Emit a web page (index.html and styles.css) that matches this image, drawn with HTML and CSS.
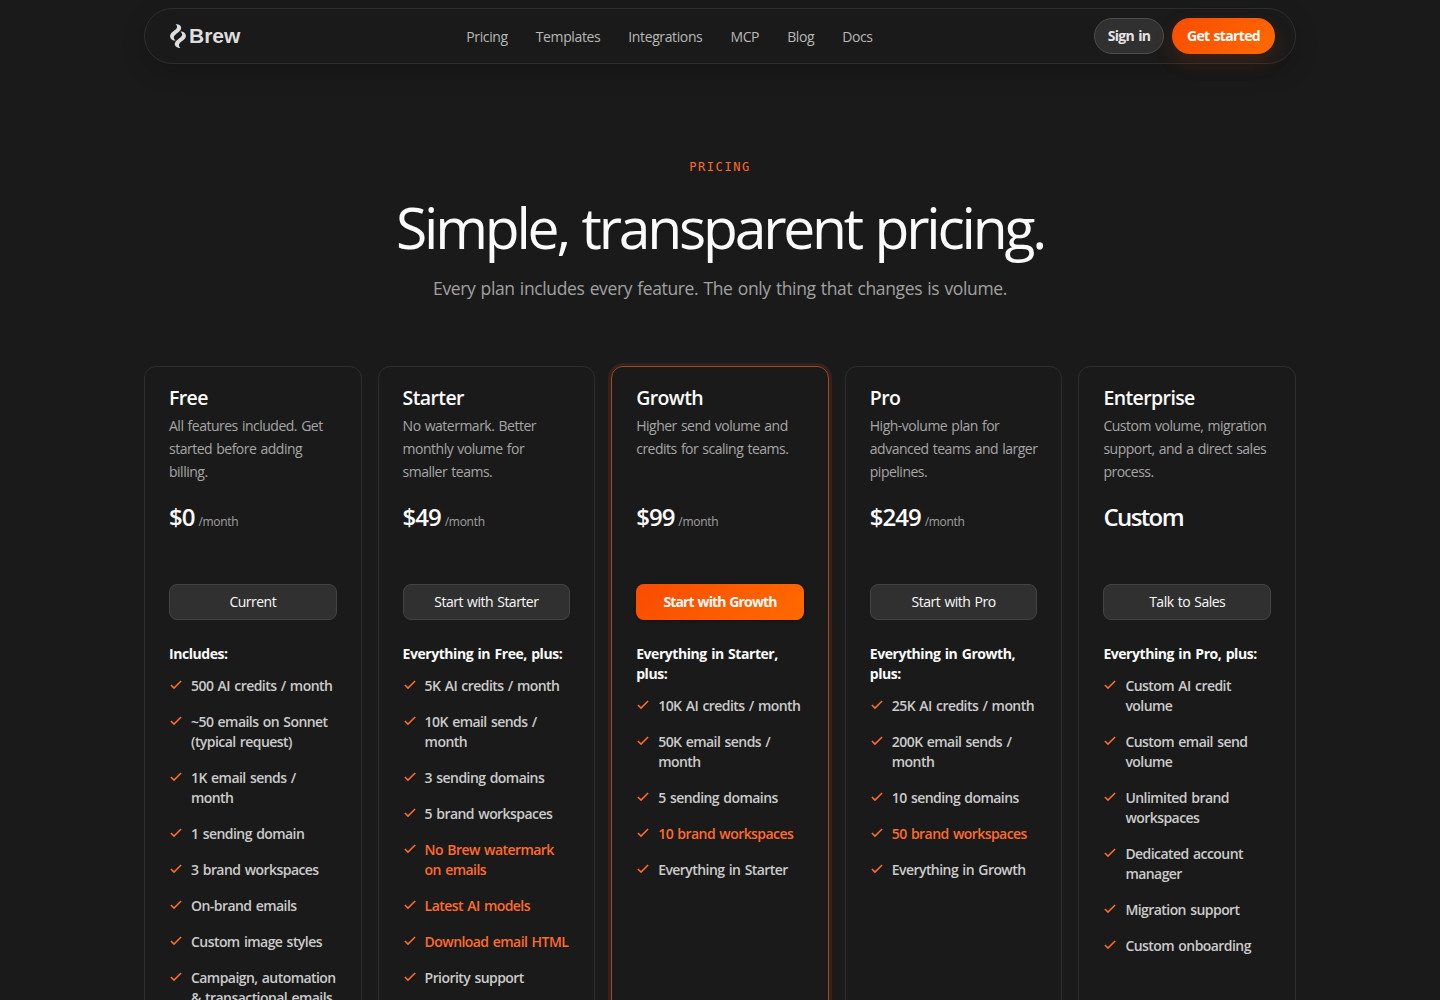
FILE: index.html
```html
<!DOCTYPE html>
<html lang="en">
<head>
    <meta charset="UTF-8">
    <meta name="viewport" content="width=device-width, initial-scale=1.0">
    <title>Brew - Pricing</title>
    <link rel="stylesheet" href="styles.css">
</head>
<body>
    <svg width="0" height="0" class="sprite">
        <symbol id="check" viewBox="0 0 14 14">
            <path d="M1.900 7l3.100 3.100L12.100 3" fill="none" stroke="currentColor" stroke-width="1.5"/>
        </symbol>
    </svg>

    <header class="navbar">
        <a class="logo" href="#">
            <svg width="16" height="24" viewBox="0 0 16 24">
                <path id="wisp" d="M5.500 0C9.800 0 12.200 2.800 10.800 5.600C9.400 8.400 4.400 10.400 3.800 13.200C3.600 14.500 4.600 15.500 5.600 16.600C2 16.800 0 14.500 0.100 11.800C0.300 8 6.300 6.500 7 3.600C7.300 2.200 6.700 1 5.500 0Z"/>
                <use href="#wisp" transform="rotate(180 8 12)"/>
            </svg>
            <span>Brew</span>
        </a>
        <nav class="menu">
            <a href="#">Pricing</a>
            <a href="#">Templates</a>
            <a href="#">Integrations</a>
            <a href="#">MCP</a>
            <a href="#">Blog</a>
            <a href="#">Docs</a>
        </nav>
        <div class="actions">
            <a class="sign-in" href="#"><span>Sign in</span></a>
            <a class="get-started" href="#"><span>Get started</span></a>
        </div>
    </header>

    <section class="hero">
        <p class="eyebrow">PRICING</p>
        <h1>Simple, transparent pricing.</h1>
        <p class="subtitle">Every plan includes every feature. The only thing that changes is volume.</p>
    </section>

    <main class="plans">
        <article class="plan">
            <h2>Free</h2>
            <p class="desc">All features included. Get<br>started before adding<br>billing.</p>
            <p class="price"><strong>$0</strong><span>/month</span></p>
            <a class="btn" href="#">Current</a>
            <h3>Includes:</h3>
            <ul>
                <li><svg><use href="#check"/></svg><span>500 AI credits / month</span></li>
                <li><svg><use href="#check"/></svg><span>~50 emails on Sonnet<br>(typical request)</span></li>
                <li><svg><use href="#check"/></svg><span>1K email sends /<br>month</span></li>
                <li><svg><use href="#check"/></svg><span>1 sending domain</span></li>
                <li><svg><use href="#check"/></svg><span>3 brand workspaces</span></li>
                <li><svg><use href="#check"/></svg><span>On-brand emails</span></li>
                <li><svg><use href="#check"/></svg><span>Custom image styles</span></li>
                <li><svg><use href="#check"/></svg><span>Campaign, automation<br>&amp; transactional emails</span></li>
            </ul>
        </article>

        <article class="plan">
            <h2>Starter</h2>
            <p class="desc">No watermark. Better<br>monthly volume for<br>smaller teams.</p>
            <p class="price"><strong>$49</strong><span>/month</span></p>
            <a class="btn" href="#">Start with Starter</a>
            <h3>Everything in Free, plus:</h3>
            <ul>
                <li><svg><use href="#check"/></svg><span>5K AI credits / month</span></li>
                <li><svg><use href="#check"/></svg><span>10K email sends /<br>month</span></li>
                <li><svg><use href="#check"/></svg><span>3 sending domains</span></li>
                <li><svg><use href="#check"/></svg><span>5 brand workspaces</span></li>
                <li class="highlight"><svg><use href="#check"/></svg><span>No Brew watermark<br>on emails</span></li>
                <li class="highlight"><svg><use href="#check"/></svg><span>Latest AI models</span></li>
                <li class="highlight"><svg><use href="#check"/></svg><span>Download email HTML</span></li>
                <li><svg><use href="#check"/></svg><span>Priority support</span></li>
            </ul>
        </article>

        <article class="plan featured">
            <h2>Growth</h2>
            <p class="desc">Higher send volume and<br>credits for scaling teams.</p>
            <p class="price"><strong>$99</strong><span>/month</span></p>
            <a class="btn primary" href="#">Start with Growth</a>
            <h3>Everything in Starter,<br>plus:</h3>
            <ul>
                <li><svg><use href="#check"/></svg><span>10K AI credits / month</span></li>
                <li><svg><use href="#check"/></svg><span>50K email sends /<br>month</span></li>
                <li><svg><use href="#check"/></svg><span>5 sending domains</span></li>
                <li class="highlight"><svg><use href="#check"/></svg><span>10 brand workspaces</span></li>
                <li><svg><use href="#check"/></svg><span>Everything in Starter</span></li>
            </ul>
        </article>

        <article class="plan">
            <h2>Pro</h2>
            <p class="desc">High-volume plan for<br>advanced teams and larger<br>pipelines.</p>
            <p class="price"><strong>$249</strong><span>/month</span></p>
            <a class="btn" href="#">Start with Pro</a>
            <h3>Everything in Growth,<br>plus:</h3>
            <ul>
                <li><svg><use href="#check"/></svg><span>25K AI credits / month</span></li>
                <li><svg><use href="#check"/></svg><span>200K email sends /<br>month</span></li>
                <li><svg><use href="#check"/></svg><span>10 sending domains</span></li>
                <li class="highlight"><svg><use href="#check"/></svg><span>50 brand workspaces</span></li>
                <li><svg><use href="#check"/></svg><span>Everything in Growth</span></li>
            </ul>
        </article>

        <article class="plan">
            <h2>Enterprise</h2>
            <p class="desc">Custom volume, migration<br>support, and a direct sales<br>process.</p>
            <p class="price custom"><strong>Custom</strong></p>
            <a class="btn" href="#">Talk to Sales</a>
            <h3>Everything in Pro, plus:</h3>
            <ul>
                <li><svg><use href="#check"/></svg><span>Custom AI credit<br>volume</span></li>
                <li><svg><use href="#check"/></svg><span>Custom email send<br>volume</span></li>
                <li><svg><use href="#check"/></svg><span>Unlimited brand<br>workspaces</span></li>
                <li><svg><use href="#check"/></svg><span>Dedicated account<br>manager</span></li>
                <li><svg><use href="#check"/></svg><span>Migration support</span></li>
                <li><svg><use href="#check"/></svg><span>Custom onboarding</span></li>
            </ul>
        </article>
    </main>
</body>
</html>
```
FILE: styles.css
```css
* {
    box-sizing: border-box;
}
body {
    margin: 0;
    height: 1000px;
    padding: 8px 144px 0;
    overflow: hidden;
    background: #1a1a1a;
    color: #fafafa;
    font-family: "Segoe UI", "Open Sans", "Noto Sans", sans-serif;
}
h1, h2, h3, p, ul {
    margin: 0;
    padding: 0;
}
a {
    color: inherit;
    text-decoration: none;
    white-space: nowrap;
}
.sprite {
    display: none;
}

/* navbar */
.navbar {
    display: grid;
    grid-template-columns: 1fr auto 1fr;
    align-items: center;
    height: 56px;
    padding: 0 20px 0 25px;
    border: 1px solid #2e2e2e;
    border-radius: 28px;
    box-shadow: 0 8px 24px rgba(0, 0, 0, 0.18);
}
.logo {
    display: flex;
    align-items: center;
    gap: 3px;
    color: #dedede;
    font: bold 21px "Liberation Sans", Arial, sans-serif;
}
.logo svg {
    fill: currentColor;
}
.menu {
    display: flex;
    gap: 28px;
    padding-right: 106px;
    padding-top: 1px;
    color: #b8b8b8;
    font-size: 14px;
    font-weight: 500;
    letter-spacing: -0.38px;
}
.actions {
    display: flex;
    justify-content: flex-end;
    gap: 8px;
    font-size: 14px;
    font-weight: 700;
    letter-spacing: -0.65px;
    word-spacing: 1px;
}
.actions a {
    display: flex;
    align-items: center;
    justify-content: center;
    height: 36px;
    padding-bottom: 1px;
    border-radius: 18px;
}
.sign-in {
    width: 70px;
    background: #303030;
    border: 1px solid #4d4d4d;
    color: #e4e4e4;
}
.get-started {
    width: 103px;
    background: linear-gradient(135deg, #f94c00, #ff6a00);
    box-shadow: 0 8px 20px rgba(255, 90, 10, 0.15);
    color: #fff;
}

/* hero */
.hero {
    display: flex;
    flex-direction: column;
    align-items: center;
    padding-top: 94px;
    white-space: nowrap;
}
.eyebrow {
    color: #ff6b2c;
    font: 12px/18px "DejaVu Sans Mono", monospace;
    letter-spacing: 1.56px;
}
.hero h1 {
    margin-top: 18px;
    font-size: 57px;
    font-weight: 400;
    line-height: 66px;
    letter-spacing: -3.2px;
    word-spacing: 2px;
}
.subtitle {
    margin-top: 14px;
    color: #a1a1a1;
    font-size: 17.5px;
    line-height: 28px;
    letter-spacing: -0.37px;
    word-spacing: 1px;
}

/* plans */
.plans {
    display: grid;
    grid-template-columns: repeat(5, 1fr);
    gap: 16px;
    margin-top: 64px;
}
.plan {
    min-width: 0;
    height: 720px;
    padding: 17px 24px;
    border: 1px solid #2e2e2e;
    border-radius: 12px;
    white-space: nowrap;
}
.plan.featured {
    border-color: #9b4a26;
    box-shadow: 0 0 0 3px #35211a;
}
.plan h2 {
    font-size: 19.5px;
    font-weight: 600;
    line-height: 28px;
    letter-spacing: -0.6px;
}
.desc {
    height: 69px;
    margin-top: 2px;
    color: #a6a6a6;
    font-size: 14px;
    line-height: 23px;
    letter-spacing: -0.5px;
    word-spacing: 1px;
}
.price {
    display: flex;
    align-items: baseline;
    gap: 4px;
    height: 36px;
    margin-top: 16px;
}
.price strong {
    font-size: 24px;
    font-weight: 600;
    line-height: 36px;
    letter-spacing: -1px;
}
.price.custom strong {
    letter-spacing: -1.6px;
}
.price span {
    color: #a1a1a1;
    font-size: 12px;
    letter-spacing: -0.3px;
}
.btn {
    display: flex;
    align-items: center;
    justify-content: center;
    height: 36px;
    margin-top: 49px;
    padding-bottom: 2px;
    border: 1px solid #434343;
    border-radius: 8px;
    background: #303030;
    font-size: 14px;
    letter-spacing: -0.5px;
    word-spacing: 1px;
}
.btn.primary {
    border: none;
    background: linear-gradient(135deg, #f94c00, #ff6a00);
    box-shadow: 0 1px 3px rgba(0, 0, 0, 0.4);
    font-weight: 700;
    letter-spacing: -0.87px;
}
.plan h3 {
    margin-top: 24px;
    font-size: 14px;
    font-weight: 700;
    line-height: 20px;
    letter-spacing: -0.45px;
    word-spacing: 1.2px;
}
.plan ul {
    display: flex;
    flex-direction: column;
    gap: 16px;
    margin-top: 12px;
    list-style: none;
}
.plan li {
    display: flex;
    gap: 8px;
    color: #cbcbcb;
    font-size: 14px;
    font-weight: 600;
    line-height: 20px;
    letter-spacing: -0.56px;
    word-spacing: 1.2px;
}
.plan li svg {
    flex: none;
    width: 14px;
    height: 14px;
    margin-top: 2px;
    color: #ff6b2c;
}
.plan li.highlight {
    color: #ff6b2c;
}
```
